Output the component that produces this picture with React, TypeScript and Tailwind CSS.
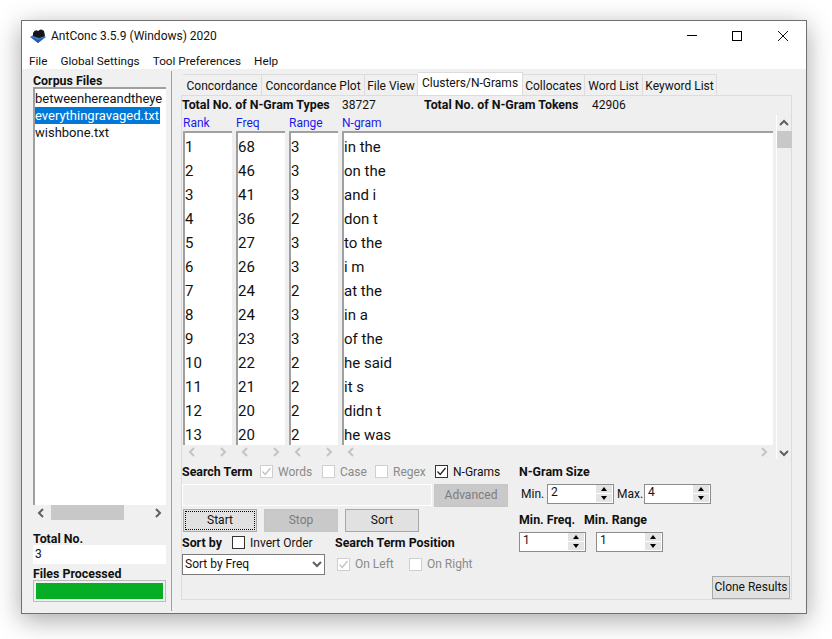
const ROWS = [
  ['1', '68', '3', 'in the'],
  ['2', '46', '3', 'on the'],
  ['3', '41', '3', 'and i'],
  ['4', '36', '2', 'don t'],
  ['5', '27', '3', 'to the'],
  ['6', '26', '3', 'i m'],
  ['7', '24', '2', 'at the'],
  ['8', '24', '3', 'in a'],
  ['9', '23', '3', 'of the'],
  ['10', '22', '2', 'he said'],
  ['11', '21', '2', 'it s'],
  ['12', '20', '2', 'didn t'],
  ['13', '20', '2', 'he was'],
];

const TABS = [
  { label: 'Concordance', width: 'w-[79px]' },
  { label: 'Concordance Plot', width: 'w-[103px]' },
  { label: 'File View', width: 'w-[53px]' },
  { label: 'Clusters/N-Grams', width: 'w-[105px]', active: true },
  { label: 'Collocates', width: 'w-[62px]' },
  { label: 'Word List', width: 'w-[58px]' },
  { label: 'Keyword List', width: 'w-[74px]' },
];

function Chevron({ dir, muted }: { dir: 'left' | 'right' | 'up' | 'down'; muted?: boolean }) {
  const points = {
    left: '7,1 3,5 7,9',
    right: '3,1 7,5 3,9',
    up: '1,7 5,3 9,7',
    down: '1,3 5,7 9,3',
  }[dir];
  return (
    <svg width="10" height="10" viewBox="0 0 10 10" className="shrink-0">
      <polyline points={points} fill="none" stroke={muted ? '#c4c4c4' : '#606060'} strokeWidth="2" />
    </svg>
  );
}

function Check({ label, checked, disabled }: { label: string; checked?: boolean; disabled?: boolean }) {
  return (
    <div className={`flex items-center gap-[5px] ${disabled ? 'text-[#8a8a8a]' : 'text-[#111]'}`}>
      <span className={`flex h-[13px] w-[13px] items-center justify-center border bg-white ${disabled ? 'border-[#cfcfcf]' : 'border-[#333]'}`}>
        {checked && (
          <svg width="11" height="11" viewBox="0 0 11 11">
            <polyline points="1.5,5.5 4.2,8.5 9.5,2" fill="none" stroke={disabled ? '#c0c0c0' : '#222'} strokeWidth="1.2" />
          </svg>
        )}
      </span>
      {label}
    </div>
  );
}

function Spinner({ value, width }: { value: string; width: string }) {
  return (
    <div className={`flex h-[20px] items-stretch border border-[#8c8c8c] bg-white pl-[3px] ${width}`}>
      <span className="flex-1 leading-[15px]">{value}</span>
      <div className="flex w-[17px] flex-col justify-center gap-px pr-[1px]">
        <span className="flex h-[8px] items-center justify-center bg-[#e4e4e4]">
          <span className="h-0 w-0 border-x-[3.5px] border-b-[4px] border-x-transparent border-b-black" />
        </span>
        <span className="flex h-[8px] items-center justify-center bg-[#e4e4e4]">
          <span className="h-0 w-0 border-x-[3.5px] border-t-[4px] border-x-transparent border-t-black" />
        </span>
      </div>
    </div>
  );
}

function Btn({ label, disabled, focused }: { label: string; disabled?: boolean; focused?: boolean }) {
  return (
    <div className={`flex h-[23px] w-[74px] items-center justify-center border ${disabled ? 'border-[#c6c6c6] bg-[#c9c9c9] text-[#7c7c7c]' : 'border-[#a8a8a8] bg-[#e1e1e1]'}`}>
      {focused ? (
        <span className="flex h-[19px] w-[70px] items-center justify-center border border-dotted border-black">{label}</span>
      ) : (
        label
      )}
    </div>
  );
}

function ResultColumn({ index, width }: { index: number; width: string }) {
  return (
    <div className={`h-full overflow-hidden border-t-2 border-l-2 border-[#a0a0a0] bg-white pt-[2px] text-[15px] ${width}`}>
      {ROWS.map((row) => (
        <div key={row[0]} className="h-[24px] leading-[24px] whitespace-nowrap">
          {row[index]}
        </div>
      ))}
    </div>
  );
}

function ColumnScroll({ width }: { width: string }) {
  return (
    <div className={`flex items-center justify-between px-[4px] ${width}`}>
      <Chevron dir="left" muted />
      <Chevron dir="right" muted />
    </div>
  );
}

export default function App() {
  return (
    <div
      className="h-[639px] w-[832px] overflow-hidden bg-white pt-[20px] pl-[21px] text-[12px] leading-[16px] text-[#111]"
      style={{ fontFamily: 'Roboto, "Noto Sans", sans-serif' }}
    >
      <div className="flex h-[594px] w-[786px] flex-col border border-[#707070] bg-white shadow-[0_6px_24px_rgba(0,0,0,0.35)]">
        {/* Title bar */}
        <div className="flex h-[29px] items-center pl-[8px]">
          <svg width="17" height="16" viewBox="0 0 17 16" className="mr-[4px]">
            <polygon points="0,9 8,4 16,9 8,15" fill="#3f78c8" />
            <polygon points="1,9 8,12 15,9 8,15" fill="#2a5aa8" />
            <path d="M3 5 Q5 1 8 3 Q11 0 14 3 L15 8 L9 10 L3 8 Z" fill="#15151c" />
          </svg>
          <span>AntConc 3.5.9 (Windows) 2020</span>
          <div className="ml-auto flex items-center">
            <span className="mr-[35px] h-px w-[10px] bg-black" />
            <span className="mr-[36px] h-[10px] w-[10px] border border-black" />
            <svg width="10" height="10" viewBox="0 0 10 10" className="mr-[18px]">
              <path d="M0 0 L10 10 M10 0 L0 10" stroke="#111" strokeWidth="1" />
            </svg>
          </div>
        </div>

        {/* Menu bar */}
        <div className="flex h-[19px] items-center gap-[13px] pt-[2px] pl-[7px] text-[11.75px]">
          <span>File</span>
          <span>Global Settings</span>
          <span>Tool Preferences</span>
          <span>Help</span>
        </div>

        <div className="flex flex-1 bg-[#f0f0f0]">
          {/* Corpus files sidebar */}
          <div className="flex w-[149px] flex-col pt-[3px] pl-[11px]">
            <div className="h-[15px] text-[12.4px] font-bold leading-[17px]">Corpus Files</div>
            <div className="h-[418px] w-[133px] overflow-hidden border-t-2 border-l-2 border-[#a0a0a0] bg-white pt-[1px] text-[13px] leading-[17px]">
              <div className="w-[128px] overflow-hidden whitespace-nowrap">betweenhereandtheye</div>
              <div className="w-[125px] overflow-hidden bg-[#0078d7] whitespace-nowrap text-white">everythingravaged.txt</div>
              <div>wishbone.txt</div>
            </div>
            <div className="flex h-[15px] w-[133px] items-center px-[3px]">
              <Chevron dir="left" />
              <div className="ml-[5px] h-[15px] w-[73px] bg-[#c8c8c8]" />
              <span className="flex-1" />
              <Chevron dir="right" />
            </div>
            <div className="mt-[10px] h-[15px] text-[12.4px] font-bold leading-[17px]">Total No.</div>
            <div className="h-[19px] w-[133px] bg-white pl-[2px] leading-[19px]">3</div>
            <div className="mt-px h-[15px] text-[12.4px] font-bold leading-[17px]">Files Processed</div>
            <div className="h-[22px] w-[133px] border border-[#bcbcbc] p-[2px]">
              <div className="h-full w-full bg-[#06ae26]" />
            </div>
          </div>

          <div className="my-[2px] w-[1px] bg-[#a0a0a0]" />

          {/* Tool area */}
          <div className="flex flex-1 flex-col pt-[3px] pl-[9px]">
            <div className="flex h-[23px] items-end pl-[2px]">
              {TABS.map((tab) => (
                <div
                  key={tab.label}
                  className={`flex items-center justify-center border-t border-r border-[#dcdcdc] whitespace-nowrap ${tab.width} ${
                    tab.active ? 'h-[23px] bg-white pb-[3px]' : 'h-[21px] bg-[#f0f0f0] pt-[1px]'
                  }`}
                >
                  {tab.label}
                </div>
              ))}
            </div>

            <div className="mr-[14px] flex h-[505px] flex-col border border-[#dcdcdc] bg-[#efefef]">
              <div className="flex h-[19px] items-center">
                <span className="w-[160px] text-[12.4px] font-bold">Total No. of N-Gram Types</span>
                <span className="w-[82px]">38727</span>
                <span className="w-[168px] text-[12.4px] font-bold">Total No. of N-Gram Tokens</span>
                <span>42906</span>
              </div>

              <div className="flex flex-1 pl-[1px]">
                <div className="flex flex-col">
                  <div className="flex h-[16px] gap-[4px] text-[#1a1aee]">
                    <span className="w-[49px]">Rank</span>
                    <span className="w-[49px]">Freq</span>
                    <span className="w-[49px]">Range</span>
                    <span>N-gram</span>
                  </div>
                  <div className="flex h-[314px] gap-[4px]">
                    <ResultColumn index={0} width="w-[49px]" />
                    <ResultColumn index={1} width="w-[49px]" />
                    <ResultColumn index={2} width="w-[49px]" />
                    <ResultColumn index={3} width="w-[431px]" />
                  </div>
                  <div className="flex h-[15px] items-center gap-[4px]">
                    <ColumnScroll width="w-[49px]" />
                    <ColumnScroll width="w-[49px]" />
                    <ColumnScroll width="w-[49px]" />
                    <ColumnScroll width="w-[431px]" />
                  </div>
                </div>
                <div className="ml-[3px] flex h-[344px] w-[15px] flex-col items-center border-l border-white pt-[3px] pb-[1px]">
                  <Chevron dir="up" />
                  <div className="mt-[3px] h-[17px] w-[15px] bg-[#c8c8c8]" />
                  <span className="flex-1" />
                  <Chevron dir="down" />
                </div>
              </div>

              {/* Search options */}
              <div className="flex h-[141px]">
                <div className="w-[337px]">
                  <div className="flex h-[24px] items-center">
                    <span className="w-[78px] text-[12.4px] font-bold">Search Term</span>
                    <div className="w-[62px]"><Check label="Words" checked disabled /></div>
                    <div className="w-[53px]"><Check label="Case" disabled /></div>
                    <div className="w-[60px]"><Check label="Regex" disabled /></div>
                    <Check label="N-Grams" checked />
                  </div>
                  <div className="flex h-[23px] gap-[2px]">
                    <div className="h-[22px] w-[250px] border border-white bg-[#efefef]" />
                    <div className="flex h-[23px] w-[74px] items-center justify-center border border-[#c6c6c6] bg-[#c9c9c9] text-[#7c7c7c]">Advanced</div>
                  </div>
                  <div className="mt-[2px] flex h-[23px] gap-[7px] pl-[1px]">
                    <Btn label="Start" focused />
                    <Btn label="Stop" disabled />
                    <Btn label="Sort" />
                  </div>
                  <div className="flex h-[22px] items-center">
                    <span className="w-[50px] text-[12.4px] font-bold">Sort by</span>
                    <div className="w-[103px]"><Check label="Invert Order" /></div>
                    <span className="text-[12.4px] font-bold">Search Term Position</span>
                  </div>
                  <div className="flex h-[21px] items-center">
                    <div className="flex h-[21px] w-[143px] items-center justify-between border border-[#7a7a7a] bg-white px-[2px]">
                      Sort by Freq
                      <Chevron dir="down" />
                    </div>
                    <div className="ml-[12px] w-[72px]"><Check label="On Left" checked disabled /></div>
                    <Check label="On Right" disabled />
                  </div>
                </div>
                <div className="flex flex-1 flex-col">
                  <div className="flex h-[24px] items-center text-[12.4px] font-bold">N-Gram Size</div>
                  <div className="flex h-[20px] items-center pl-[2px]">
                    <span className="w-[26px]">Min.</span>
                    <Spinner value="2" width="w-[67px]" />
                    <span className="w-[30px] pl-[3px]">Max.</span>
                    <Spinner value="4" width="w-[67px]" />
                  </div>
                  <div className="mt-[5px] flex h-[22px] items-center text-[12.4px] font-bold">
                    <span className="w-[65px]">Min. Freq.</span>
                    <span>Min. Range</span>
                  </div>
                  <div className="mt-[1px] flex gap-[10px]">
                    <Spinner value="1" width="w-[67px]" />
                    <Spinner value="1" width="w-[67px]" />
                  </div>
                  <div className="mt-[24px] mr-[1px] flex h-[23px] w-[78px] items-center justify-center self-end border border-[#a8a8a8] bg-[#e1e1e1]">Clone Results</div>
                </div>
              </div>
            </div>
          </div>
        </div>
      </div>
    </div>
  );
}
